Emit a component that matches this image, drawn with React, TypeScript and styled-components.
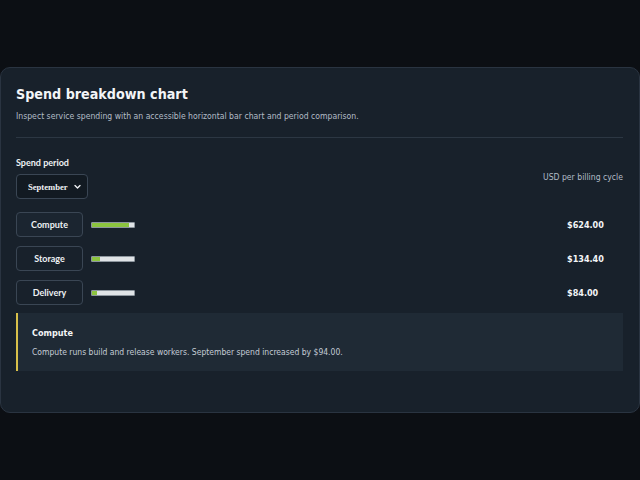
import { useState } from 'react';
import styled, { createGlobalStyle } from 'styled-components';

const GlobalStyle = createGlobalStyle`
  html, body {
    margin: 0;
    height: 100%;
    background: #0c0f14;
  }
  #root {
    min-height: 100%;
    display: flex;
    align-items: center;
  }
`;

const Card = styled.section`
  box-sizing: border-box;
  width: 100%;
  padding: 18px 16px 40px 15px;
  background: #18212b;
  border: 1px solid #2a3441;
  border-radius: 10px;
  font-family: 'DejaVu Sans Condensed', 'DejaVu Sans', sans-serif;
  color: #e8ecf0;
`;

const Title = styled.h1`
  margin: 0 0 9px;
  font-size: 14.2px;
  font-weight: 700;
  color: #f3f5f7;
`;

const Lead = styled.p`
  margin: 0;
  font-size: 8.6px;
  color: #b2bcc7;
`;

const Divider = styled.hr`
  margin: 16px 0 19px;
  border: 0;
  border-top: 1px solid #2c3743;
`;

const Toolbar = styled.div`
  display: flex;
  justify-content: space-between;
  align-items: flex-start;
  margin-bottom: 13px;
`;

const Field = styled.label`
  display: flex;
  flex-direction: column;
  gap: 6px;
  font-family: Lato, sans-serif;
  font-size: 9px;
  font-weight: 700;
  color: #eef1f4;
`;

const SelectWrap = styled.span`
  position: relative;
  display: inline-block;
  width: 72px;

  svg {
    position: absolute;
    right: 7px;
    top: 50%;
    transform: translateY(-50%);
    pointer-events: none;
  }
`;

const Select = styled.select`
  appearance: none;
  width: 100%;
  height: 25px;
  padding: 0 14px 0 11px;
  background: #121a22;
  color: #eef1f4;
  border: 1px solid #3a4654;
  border-radius: 4px;
  font-family: 'Liberation Serif', serif;
  font-size: 8.6px;
  font-weight: 700;
`;

const Unit = styled.span`
  margin-top: 15px;
  font-size: 8.6px;
  color: #b2bcc7;
`;

const Rows = styled.ul`
  list-style: none;
  margin: 0 0 8px;
  padding: 0;
  display: flex;
  flex-direction: column;
  gap: 9px;
`;

const Row = styled.li`
  display: grid;
  grid-template-columns: 67px 44px 1fr 56px;
  column-gap: 8px;
  align-items: center;
`;

const ServiceButton = styled.button<{ $active: boolean }>`
  height: 25px;
  background: ${(p) => (p.$active ? '#1b2530' : 'transparent')};
  border: 1px solid #3a4654;
  border-radius: 4px;
  color: #eef1f4;
  font-family: Lato, sans-serif;
  font-size: 9px;
  font-weight: 700;
  cursor: pointer;
`;

const Track = styled.div`
  height: 4px;
  background: #dfe3e6;
  border: 1px solid #8d969e;
  border-radius: 1px;
  overflow: hidden;
`;

const Fill = styled.div`
  height: 100%;
  background: #8cc43f;
`;

const Amount = styled.span`
  font-size: 9px;
  font-weight: 700;
  color: #f3f5f7;
`;

const Detail = styled.div`
  padding: 15px 14px 14px;
  margin-bottom: 1px;
  background: #1f2a35;
  border-left: 2px solid #d8c04a;
`;

const DetailTitle = styled.h2`
  margin: 0 0 9px;
  font-size: 9px;
  font-weight: 700;
  color: #f3f5f7;
`;

const DetailText = styled.p`
  margin: 0;
  font-size: 8.5px;
  color: #c4ccd5;
`;

const services = [
  { name: 'Compute', amount: 624, change: 94, note: 'Compute runs build and release workers.' },
  { name: 'Storage', amount: 134.4, change: 12.4, note: 'Storage holds artifacts and backups.' },
  { name: 'Delivery', amount: 84, change: -6, note: 'Delivery serves static assets at the edge.' },
];

const scaleMax = 700;

const money = (n: number) => `$${n.toFixed(2)}`;

const Chevron = () => (
  <svg width="7" height="5" viewBox="0 0 7 5" fill="none">
    <path d="M1 1l2.5 2.5L6 1" stroke="#eef1f4" strokeWidth="1.4" strokeLinecap="round" strokeLinejoin="round" />
  </svg>
);

export default function App() {
  const [period, setPeriod] = useState('September');
  const [selected, setSelected] = useState(0);
  const current = services[selected];

  return (
    <>
      <GlobalStyle />
      <Card>
        <Title>Spend breakdown chart</Title>
        <Lead>Inspect service spending with an accessible horizontal bar chart and period comparison.</Lead>
        <Divider />
        <Toolbar>
          <Field>
            Spend period
            <SelectWrap>
              <Select value={period} onChange={(e) => setPeriod(e.target.value)}>
                <option>August</option>
                <option>September</option>
              </Select>
              <Chevron />
            </SelectWrap>
          </Field>
          <Unit>USD per billing cycle</Unit>
        </Toolbar>
        <Rows>
          {services.map((s, i) => (
            <Row key={s.name}>
              <ServiceButton $active={i === selected} onClick={() => setSelected(i)}>
                {s.name}
              </ServiceButton>
              <Track>
                <Fill style={{ width: `${(s.amount / scaleMax) * 100}%` }} />
              </Track>
              <span />
              <Amount>{money(s.amount)}</Amount>
            </Row>
          ))}
        </Rows>
        <Detail>
          <DetailTitle>{current.name}</DetailTitle>
          <DetailText>
            {current.note} {period} spend {current.change >= 0 ? 'increased' : 'decreased'} by{' '}
            {money(Math.abs(current.change))}.
          </DetailText>
        </Detail>
      </Card>
    </>
  );
}
